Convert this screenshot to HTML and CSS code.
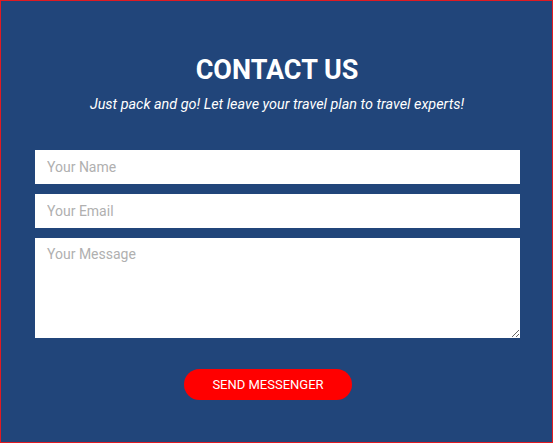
FILE: index.html
```html
<!DOCTYPE html>
<html>
<head>
<meta charset="utf-8">
<link rel="stylesheet" href="styles.css">
</head>
<body>
<section class="contact">
  <h1 class="title">CONTACT US</h1>
  <p class="subtitle">Just pack and go! Let leave your travel plan to travel experts!</p>
  <form class="form">
    <input class="field" type="text" placeholder="Your Name">
    <input class="field" type="email" placeholder="Your Email">
    <textarea class="field message" placeholder="Your Message"></textarea>
    <button class="send" type="button">SEND MESSENGER</button>
  </form>
</section>
</body>
</html>
```
FILE: styles.css
```css
html, body {
  margin: 0;
  padding: 0;
}
body {
  font-family: Roboto, "Liberation Sans", sans-serif;
}
.contact {
  box-sizing: border-box;
  width: 553px;
  height: 443px;
  border: 1px solid #e01b22;
  background: #21457a;
  padding: 53px 33px 0 34px;
  color: #fff;
}
.title {
  margin: 0;
  font-size: 27px;
  line-height: 32px;
  font-weight: 700;
  text-align: center;
}
.subtitle {
  margin: 9px 0 0;
  font-size: 14.4px;
  line-height: 20px;
  font-style: italic;
  text-align: center;
}
.form {
  margin-top: 35px;
  display: flex;
  flex-direction: column;
  gap: 10px;
}
.field {
  box-sizing: border-box;
  display: block;
  width: 485px;
  height: 34px;
  border: none;
  outline: none;
  background: #fff;
  padding: 0 12px;
  font-family: Roboto, "Liberation Sans", sans-serif;
  font-size: 14px;
  color: #333;
  margin: 0;
}
.field::placeholder {
  color: #b0b0b0;
}
.message {
  height: 100px;
  padding: 8px 12px;
  resize: vertical;
}
.send {
  margin: 21px 0 0 149px;
  width: 168px;
  height: 31px;
  border: none;
  border-radius: 16px;
  background: #ff0000;
  color: #fff;
  font-family: Roboto, "Liberation Sans", sans-serif;
  font-size: 13px;
  padding: 0;
  cursor: pointer;
}
```
